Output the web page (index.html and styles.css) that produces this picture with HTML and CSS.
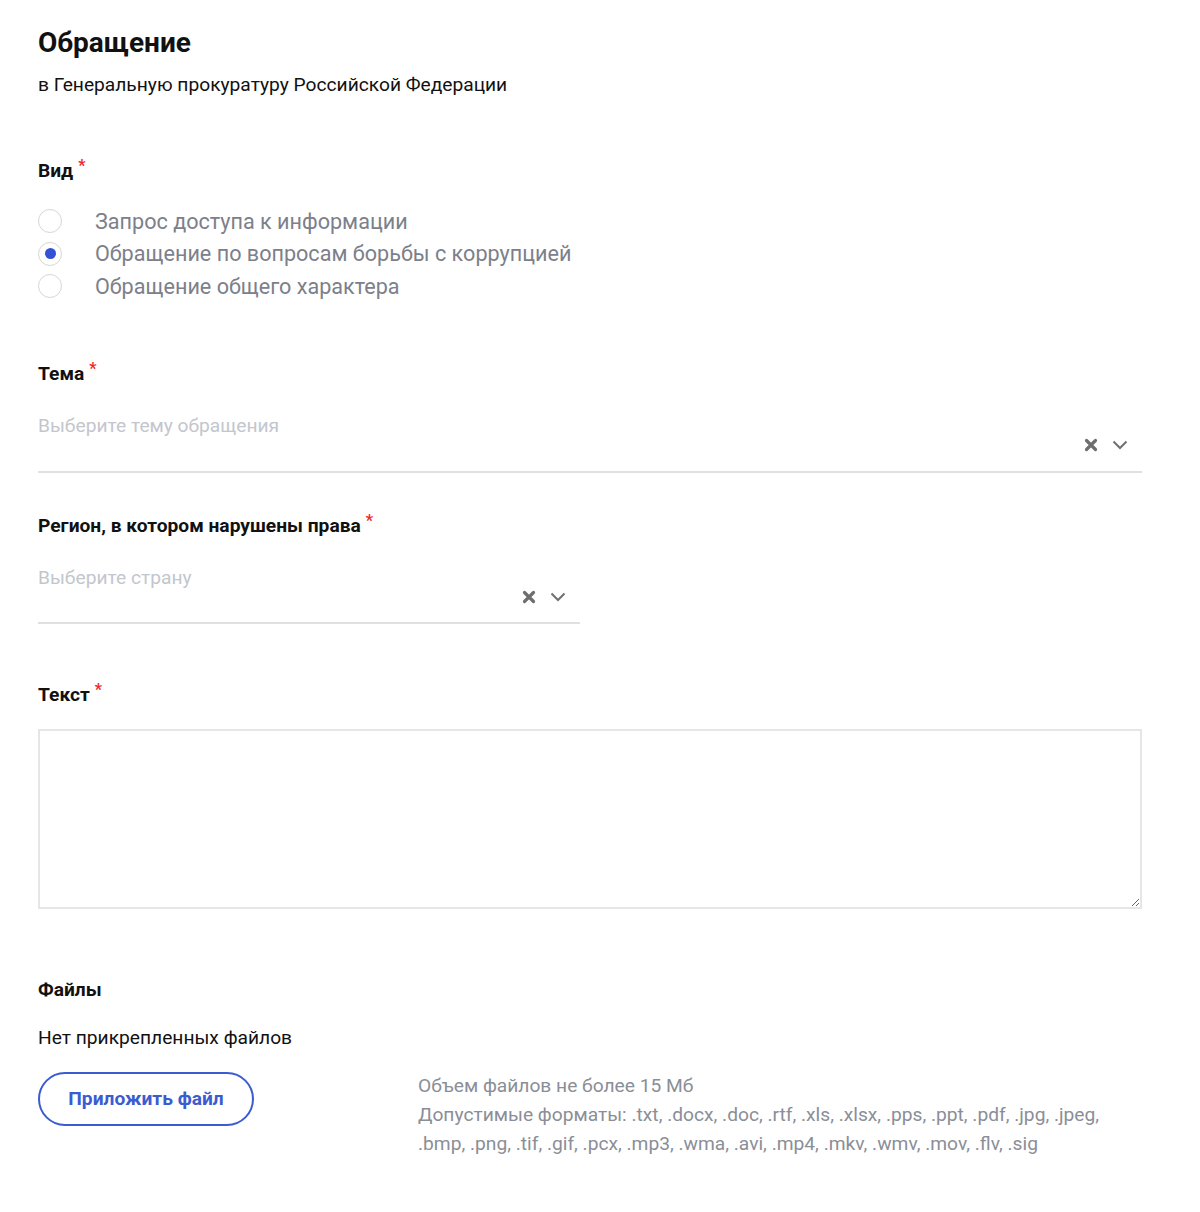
FILE: index.html
```html
<!DOCTYPE html>
<html lang="ru">
<head>
    <meta charset="UTF-8">
    <meta name="viewport" content="width=device-width, initial-scale=1.0">
    <title>Обращение</title>
    <link rel="stylesheet" href="styles.css">
</head>
<body>

<div class="page">
    <h1 class="title">Обращение</h1>
    <div class="subtitle">в Генеральную прокуратуру Российской Федерации</div>

    <div class="field field-kind">
        <div class="label">Вид<span class="req">*</span></div>
        <div class="radios">
            <label class="radio"><span class="circle"></span>Запрос доступа к информации</label>
            <label class="radio checked"><span class="circle"></span>Обращение по вопросам борьбы с коррупцией</label>
            <label class="radio"><span class="circle"></span>Обращение общего характера</label>
        </div>
    </div>

    <div class="field field-theme">
        <div class="label">Тема<span class="req">*</span></div>
        <div class="select">
            <div class="placeholder">Выберите тему обращения</div>
            <div class="select-icons">
                <svg width="14" height="14" viewBox="0 0 14 14"><path d="M2.5 2.5L11.5 11.5M11.5 2.5L2.5 11.5" stroke="#6e6e6e" stroke-width="3.2" stroke-linecap="round"/></svg>
                <svg width="16" height="10" viewBox="0 0 16 10"><path d="M1.5 1.5L8 8L14.5 1.5" stroke="#707070" stroke-width="2" fill="none"/></svg>
            </div>
        </div>
    </div>

    <div class="field field-region">
        <div class="label">Регион, в котором нарушены права<span class="req">*</span></div>
        <div class="select select-half">
            <div class="placeholder">Выберите страну</div>
            <div class="select-icons">
                <svg width="14" height="14" viewBox="0 0 14 14"><path d="M2.5 2.5L11.5 11.5M11.5 2.5L2.5 11.5" stroke="#6e6e6e" stroke-width="3.2" stroke-linecap="round"/></svg>
                <svg width="16" height="10" viewBox="0 0 16 10"><path d="M1.5 1.5L8 8L14.5 1.5" stroke="#707070" stroke-width="2" fill="none"/></svg>
            </div>
        </div>
    </div>

    <div class="field field-text">
        <div class="label">Текст<span class="req">*</span></div>
        <textarea class="text"></textarea>
    </div>

    <div class="field field-files">
        <div class="label">Файлы</div>
        <div class="no-files">Нет прикрепленных файлов</div>
        <div class="files-row">
            <button class="attach">Приложить файл</button>
            <div class="hint">
                <div>Объем файлов не более 15 Мб</div>
                <div>Допустимые форматы: .txt, .docx, .doc, .rtf, .xls, .xlsx, .pps, .ppt, .pdf, .jpg, .jpeg, .bmp, .png, .tif, .gif, .pcx, .mp3, .wma, .avi, .mp4, .mkv, .wmv, .mov, .flv, .sig</div>
            </div>
        </div>
    </div>
</div>

</body>
</html>
```

FILE: styles.css
```css
body {
    margin: 0;
    font-family: Roboto, "Noto Sans", sans-serif;
    color: #111;
    background: #fff;
}
.page {
    width: 1104px;
    padding: 24px 0 40px 38px;
}
.title {
    font-size: 28px;
    font-weight: 700;
    margin: 0;
    line-height: 38px;
}
.subtitle {
    font-size: 19.2px;
    line-height: 24px;
    margin-top: 11px;
}
.field-kind {
    margin-top: 62px;
}
.field-theme {
    margin-top: 59px;
}
.field-region {
    margin-top: 41px;
}
.field-text {
    margin-top: 59px;
}
.field-files {
    margin-top: 69px;
}
.label {
    font-size: 19.2px;
    font-weight: 700;
    line-height: 24px;
}
.req {
    color: #f0282d;
    font-size: 16px;
    vertical-align: top;
    position: relative;
    top: -5px;
    margin-left: 5px;
}
.radios {
    margin-top: 22px;
    display: flex;
    flex-direction: column;
}
.radio {
    display: flex;
    align-items: center;
    height: 32.5px;
    font-size: 21.6px;
    color: #7c808a;
}
.circle {
    width: 22px;
    height: 22px;
    border: 1px solid #d6d6d6;
    border-radius: 50%;
    margin-right: 33px;
    display: flex;
    align-items: center;
    justify-content: center;
    box-sizing: content-box;
}
.radio.checked .circle::after {
    content: "";
    width: 11px;
    height: 11px;
    border-radius: 50%;
    background: #3451d6;
}
.select {
    margin-top: 28px;
    border-bottom: 2px solid #e0e0e0;
    position: relative;
    height: 57px;
}
.select-half {
    width: 542px;
    height: 56px;
}
.placeholder {
    font-size: 19.2px;
    line-height: 24px;
    color: #c3c6cd;
}
.select-icons {
    position: absolute;
    right: 14px;
    top: 24px;
    display: flex;
    align-items: center;
    gap: 14px;
}
.text {
    display: block;
    margin-top: 22px;
    width: 1104px;
    height: 180px;
    box-sizing: border-box;
    border: 2px solid #e6e6e6;
    resize: vertical;
}
.no-files {
    font-size: 19.2px;
    line-height: 24px;
    margin-top: 24px;
}
.files-row {
    display: flex;
    margin-top: 22px;
}
.attach {
    width: 216px;
    height: 54px;
    border: 2px solid #3b5bd1;
    border-radius: 28px;
    background: #fff;
    color: #3b5bd1;
    font-family: Roboto, sans-serif;
    font-size: 19.2px;
    font-weight: 700;
    flex-shrink: 0;
}
.hint {
    margin-left: 164px;
    margin-top: -1px;
    font-size: 19.2px;
    line-height: 29px;
    color: #8a8e97;
    width: 690px;
}
```
